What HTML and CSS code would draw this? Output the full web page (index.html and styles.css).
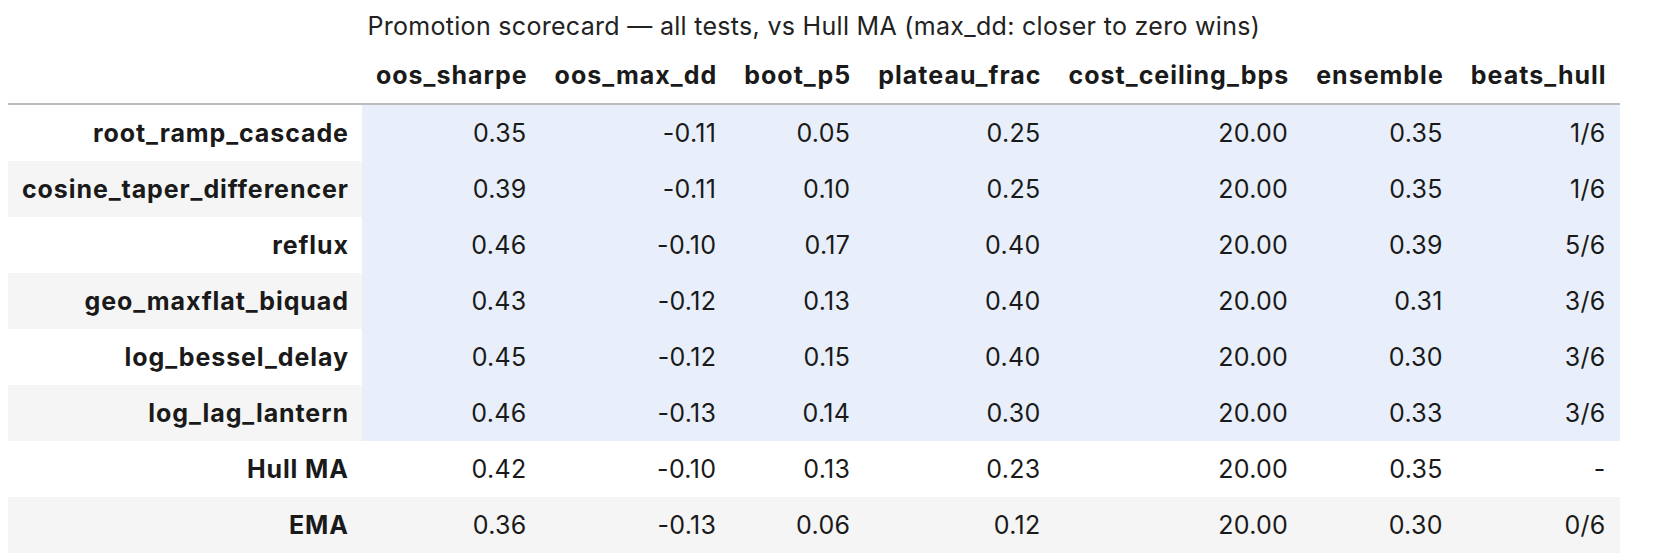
FILE: index.html
```html
<!DOCTYPE html>
<html>
<head>
<meta charset="utf-8">
<link rel="stylesheet" href="styles.css">
</head>
<body>
<table class="score">
  <caption class="cap">Promotion scorecard — all tests, vs Hull MA (max_dd: closer to zero wins)</caption>
  <thead>
    <tr>
      <th class="blank"></th>
      <th class="col">oos_sharpe</th>
      <th class="col">oos_max_dd</th>
      <th class="col">boot_p5</th>
      <th class="col">plateau_frac</th>
      <th class="col">cost_ceiling_bps</th>
      <th class="col">ensemble</th>
      <th class="col">beats_hull</th>
    </tr>
  </thead>
  <tbody>
    <tr class="cand"><th class="idx">root_ramp_cascade</th><td>0.35</td><td>-0.11</td><td>0.05</td><td>0.25</td><td>20.00</td><td>0.35</td><td>1/6</td></tr>
    <tr class="cand"><th class="idx">cosine_taper_differencer</th><td>0.39</td><td>-0.11</td><td>0.10</td><td>0.25</td><td>20.00</td><td>0.35</td><td>1/6</td></tr>
    <tr class="cand"><th class="idx">reflux</th><td>0.46</td><td>-0.10</td><td>0.17</td><td>0.40</td><td>20.00</td><td>0.39</td><td>5/6</td></tr>
    <tr class="cand"><th class="idx">geo_maxflat_biquad</th><td>0.43</td><td>-0.12</td><td>0.13</td><td>0.40</td><td>20.00</td><td>0.31</td><td>3/6</td></tr>
    <tr class="cand"><th class="idx">log_bessel_delay</th><td>0.45</td><td>-0.12</td><td>0.15</td><td>0.40</td><td>20.00</td><td>0.30</td><td>3/6</td></tr>
    <tr class="cand"><th class="idx">log_lag_lantern</th><td>0.46</td><td>-0.13</td><td>0.14</td><td>0.30</td><td>20.00</td><td>0.33</td><td>3/6</td></tr>
    <tr><th class="idx">Hull MA</th><td>0.42</td><td>-0.10</td><td>0.13</td><td>0.23</td><td>20.00</td><td>0.35</td><td>-</td></tr>
    <tr><th class="idx">EMA</th><td>0.36</td><td>-0.13</td><td>0.06</td><td>0.12</td><td>20.00</td><td>0.30</td><td>0/6</td></tr>
  </tbody>
</table>
</body>
</html>
```
FILE: styles.css
```css
body {
  margin: 8px;
  background: #ffffff;
  font-family: Inter, "Liberation Sans", sans-serif;
  color: #1a1a1a;
}
.score {
  border-collapse: collapse;
  border-spacing: 0;
  font-size: 25px;
  line-height: 30px;
  letter-spacing: 0.3px;
}
.cap {
  caption-side: top;
  text-align: center;
  padding: 3px 0 6px;
  color: #222222;
}
.score th,
.score td {
  padding: 13px 14px;
  text-align: right;
  white-space: nowrap;
  vertical-align: middle;
}
.score th {
  letter-spacing: 0.9px;
  padding-right: 13px;
}
.score thead th {
  font-weight: 700;
  letter-spacing: 1px;
  border-bottom: 2px solid #bcbcbc;
}
.score td {
  font-weight: 400;
}
.idx {
  font-weight: 700;
}
.score tbody tr:nth-child(even) {
  background: #f5f5f5;
}
.score tbody tr.cand td {
  background: #e8effa;
}
```
